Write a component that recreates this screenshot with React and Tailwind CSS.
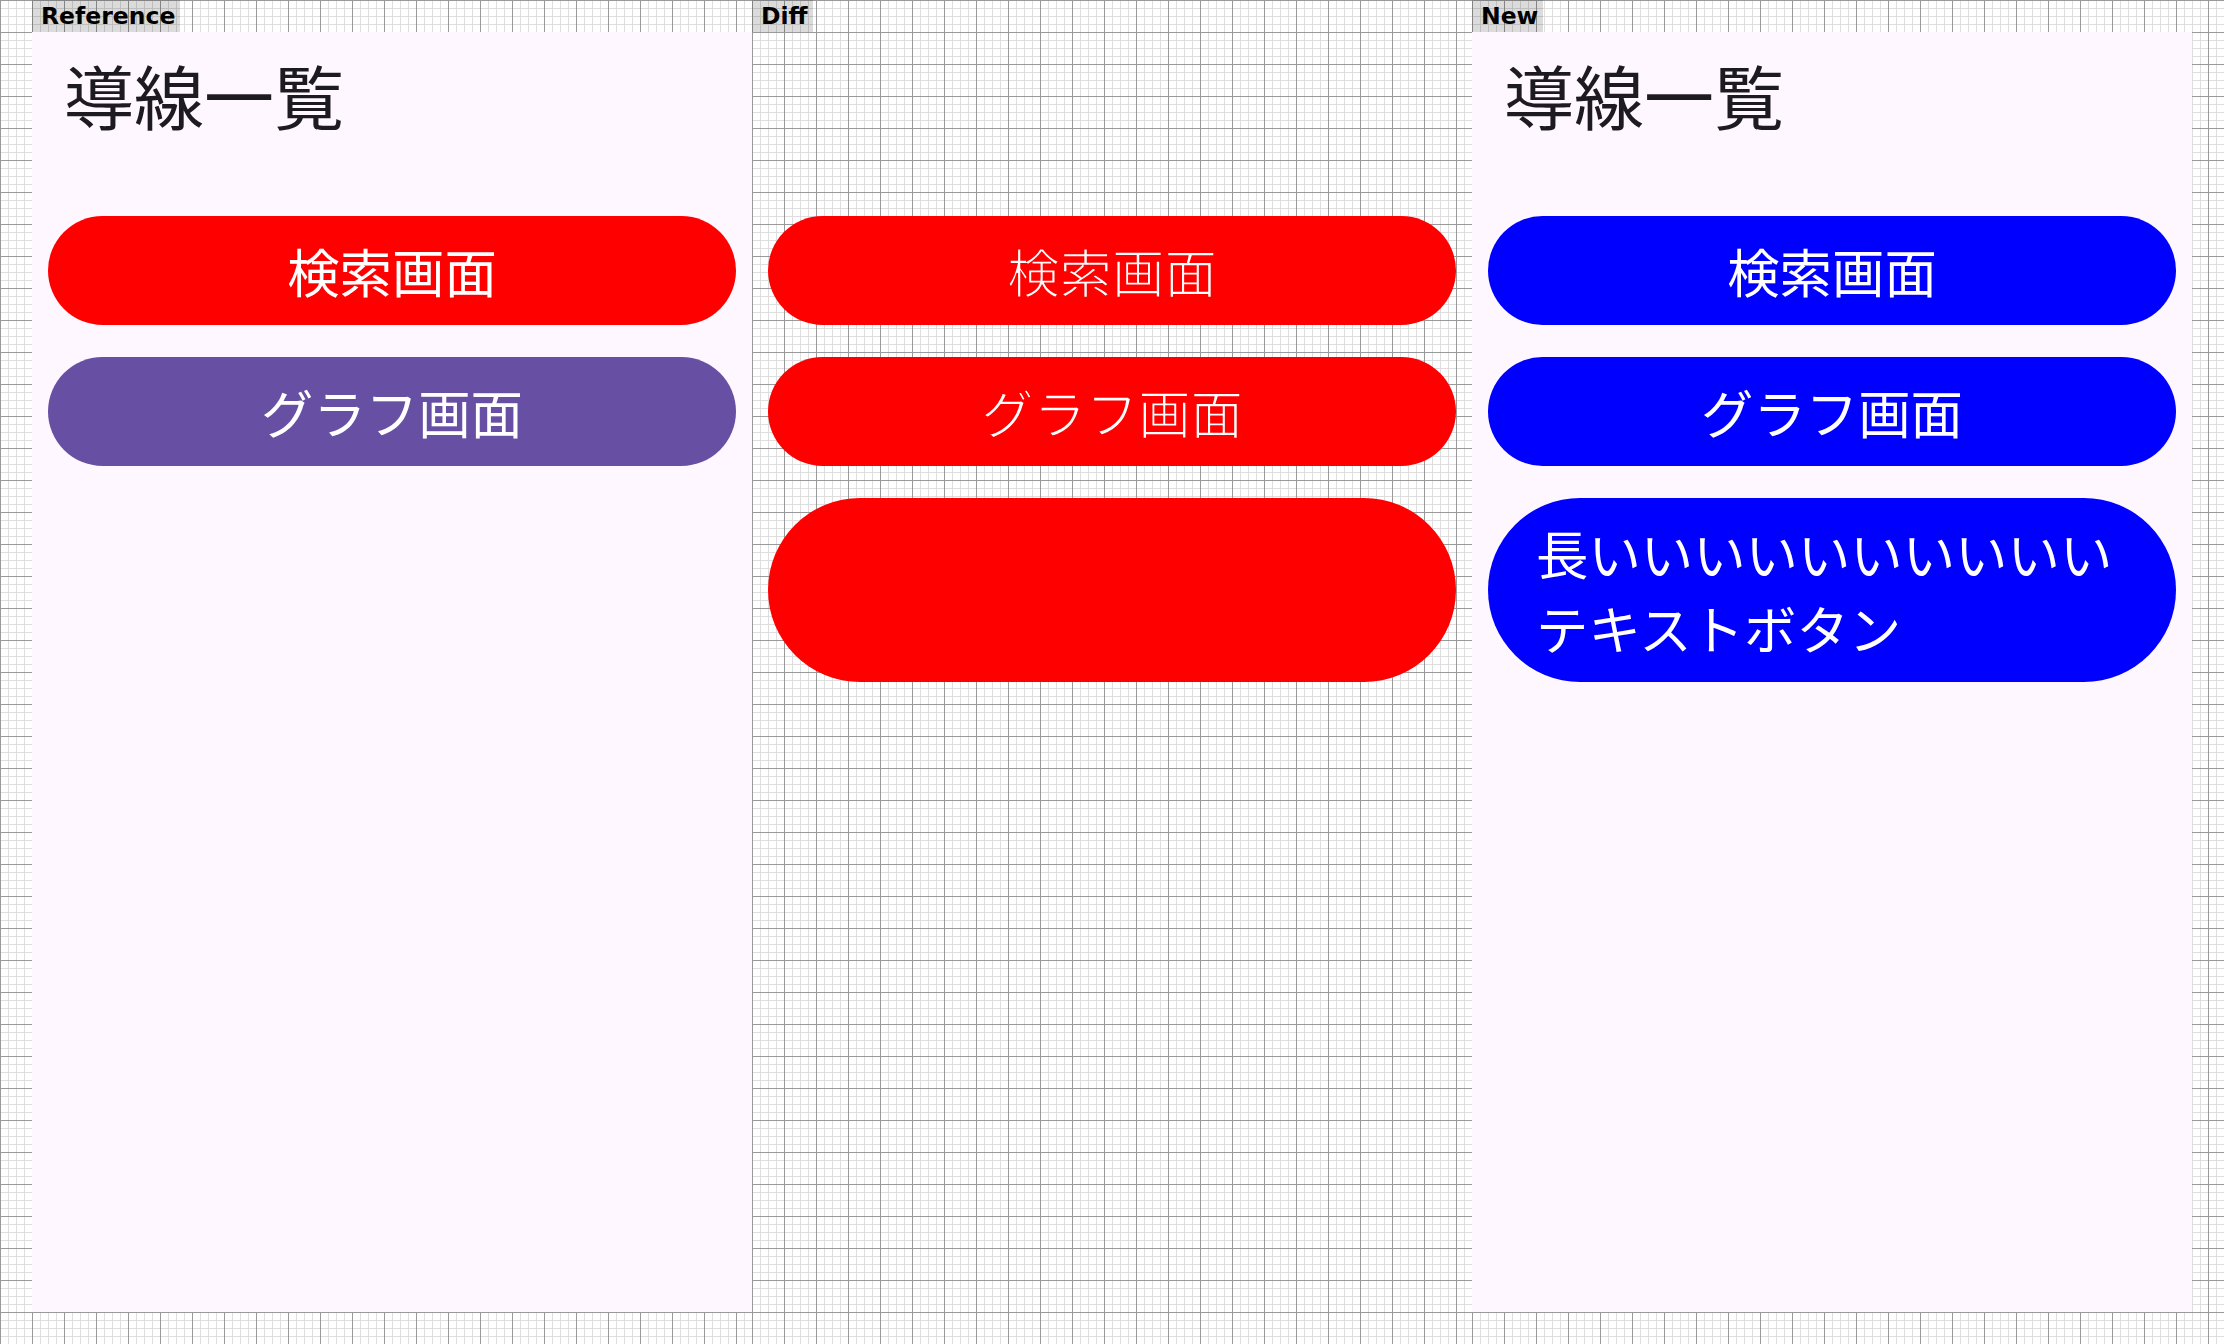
import React from "react";

const grid =
  "bg-white bg-[image:linear-gradient(to_right,#9a9a9a_1px,transparent_1px),linear-gradient(to_bottom,#9a9a9a_1px,transparent_1px),linear-gradient(to_right,#dedede_1px,transparent_1px),linear-gradient(to_bottom,#dedede_1px,transparent_1px)] bg-[size:32px_32px,32px_32px,8px_8px,8px_8px]";

function Label({ children }) {
  return (
    <div className="h-8 self-start flex items-center bg-black/[0.14] pl-[9px] pr-[5px] font-['DejaVu_Sans',sans-serif] font-bold text-[23.5px] leading-8 text-black">
      {children}
    </div>
  );
}

function Pill({ color, children, left, diff }) {
  return (
    <div
      className={`w-full rounded-full px-12 py-[17px] text-[52.4px] leading-[75px] text-white ${color} ${
        left ? "text-left" : "text-center"
      } ${diff ? "[-webkit-text-stroke:1.5px_#ff0000]" : ""}`}
    >
      {children}
    </div>
  );
}

function Panel({ colorA, colorB, third }) {
  return (
    <div className="w-[720px] h-[1280px] bg-[#fef7ff] flex flex-col font-['Noto_Sans_CJK_JP',sans-serif]">
      <div className="pl-8 pt-[28px] text-[70px] leading-none text-[#1d1b20]">導線一覧</div>
      <div className="px-4 pt-[86px] flex flex-col gap-8">
        <Pill color={colorA}>検索画面</Pill>
        <Pill color={colorB}>グラフ画面</Pill>
        {third && (
          <Pill color={colorA} left>
            長いいいいいいいいいい
            <br />
            テキストボタン
          </Pill>
        )}
      </div>
    </div>
  );
}

function DiffPanel() {
  return (
    <div className="w-[720px] h-[1280px] flex flex-col font-['Noto_Sans_CJK_JP',sans-serif]">
      <div className="pl-8 pt-[28px] text-[70px] leading-none text-transparent">　</div>
      <div className="px-4 pt-[86px] flex flex-col gap-8">
        <Pill color="bg-[#ff0000]" diff>検索画面</Pill>
        <Pill color="bg-[#ff0000]" diff>グラフ画面</Pill>
        <div className="w-full rounded-full bg-[#ff0000] h-[184px]" />
      </div>
    </div>
  );
}

export default function App() {
  return (
    <div className="flex w-[2224px] h-[1344px] overflow-hidden">
      <div className={`${grid} w-[752px] h-full pl-8 flex flex-col`}>
        <Label>Reference</Label>
        <Panel colorA="bg-[#ff0000]" colorB="bg-[#6750a4]" />
      </div>
      <div className={`${grid} w-[720px] h-full flex flex-col`}>
        <Label>Diff</Label>
        <DiffPanel />
      </div>
      <div className={`${grid} w-[752px] h-full pr-8 flex flex-col`}>
        <Label>New</Label>
        <Panel colorA="bg-[#0000ff]" colorB="bg-[#0000ff]" third />
      </div>
    </div>
  );
}
